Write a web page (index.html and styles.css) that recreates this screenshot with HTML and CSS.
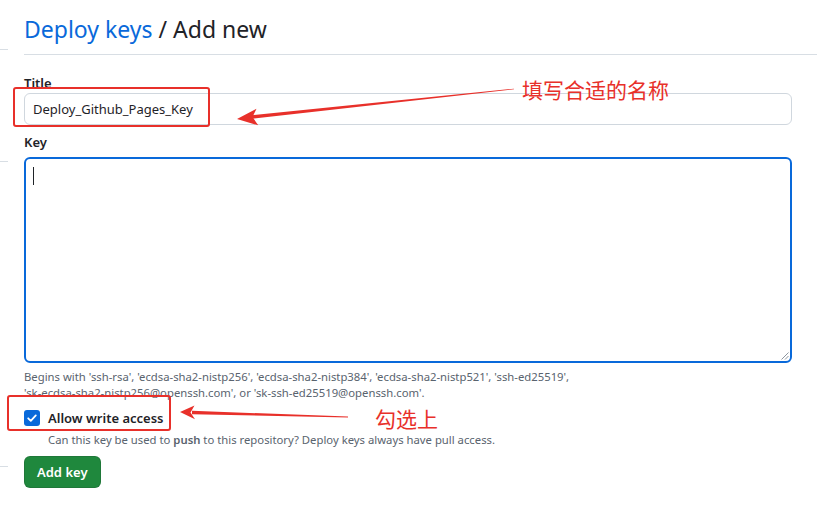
FILE: index.html
```html
<!DOCTYPE html>
<html lang="en">
<head>
<meta charset="utf-8">
<title>Deploy keys / Add new</title>
<link rel="stylesheet" href="styles.css">
</head>
<body>
<div class="page">
  <aside class="side">
    <div class="stub stub-1"></div>
    <div class="stub stub-2"></div>
    <div class="stub stub-3"></div>
  </aside>
  <main class="main">
    <h1 class="heading"><a class="crumb" href="#">Deploy keys</a> / Add new</h1>
    <form class="form">
      <div class="group group-title">
        <label class="label">Title</label>
        <div class="input">Deploy_Github_Pages_Key</div>
      </div>
      <div class="group group-key">
        <label class="label">Key</label>
        <div class="textarea">
          <span class="caret"></span>
          <svg class="grip" width="9" height="9" viewBox="0 0 9 9"><path d="M8.5 1.5 1.5 8.5M8.5 5 5 8.5" stroke="#8c959f" stroke-width="1" fill="none"/></svg>
        </div>
        <p class="hint">Begins with 'ssh-rsa', 'ecdsa-sha2-nistp256', 'ecdsa-sha2-nistp384', 'ecdsa-sha2-nistp521', 'ssh-ed25519',<br>'sk-ecdsa-sha2-nistp256@openssh.com', or 'sk-ssh-ed25519@openssh.com'.</p>
      </div>
      <div class="check-row">
        <span class="checkbox">
          <svg width="12" height="12" viewBox="0 0 12 12"><path d="M2.2 6.3 4.8 8.8 9.8 3.4" stroke="#fff" stroke-width="1.8" fill="none" stroke-linecap="round" stroke-linejoin="round"/></svg>
        </span>
        <span class="check-label">Allow write access</span>
      </div>
      <p class="check-note">Can this key be used to <b>push</b> to this repository? Deploy keys always have pull access.</p>
      <button class="btn" type="button">Add key</button>
    </form>
  </main>

  <div class="mark mark-title"></div>
  <div class="mark mark-check"></div>
  <svg class="arrows" width="817" height="506" viewBox="0 0 817 506">
    <polygon fill="#e8302a" points="514,88.7 514,89.3 252.2,118.7 251.8,115.3"/>
    <polygon fill="#e8302a" points="237,119 256.5,108.8 252.5,117 258.2,125.3"/>
    <polygon fill="#e8302a" points="348,416.6 348,417.4 192,414.2 192,410.8"/>
    <polygon fill="#e8302a" points="180,412 194.5,405.5 190.5,412.5 195,419.2"/>
  </svg>
  <div class="note note-title">填写合适的名称</div>
  <div class="note note-check">勾选上</div>
</div>
</body>
</html>
```

FILE: styles.css
```css
* { box-sizing: border-box; }

html, body {
  margin: 0;
  padding: 0;
  background: #ffffff;
}

body {
  font-family: "Noto Sans", "Liberation Sans", sans-serif;
  color: #1f2328;
  font-size: 13px;
}

.page {
  position: relative;
  width: 817px;
  height: 506px;
  overflow: hidden;
  display: grid;
  grid-template-columns: 8px 1fr;
  column-gap: 16px;
}

/* sidebar separators */
.side {
  display: flex;
  flex-direction: column;
}
.stub {
  border-bottom: 1px solid #d8dee4;
}
.stub-1 { height: 50px; }
.stub-2 { height: 112px; }
.stub-3 { height: 305px; }

.main {
  padding-top: 11px;
}

.heading {
  margin: 0;
  font-size: 23px;
  line-height: 36px;
  font-weight: 400;
  color: #1f2328;
  padding-bottom: 7px;
  border-bottom: 1px solid #d8dee4;
}
.crumb {
  color: #0969da;
  text-decoration: none;
}

.form {
  width: 768px;
}

.group-title { margin-top: 18px; }
.group-key { margin-top: 7px; }

.label {
  display: block;
  font-weight: 600;
  font-size: 13px;
  line-height: 20px;
}
.group-key .label { margin-bottom: 5px; }

.input {
  height: 32px;
  border: 1px solid #d0d7de;
  border-radius: 6px;
  padding: 0 8px;
  font-size: 13px;
  line-height: 30px;
  color: #1f2328;
}

.textarea {
  position: relative;
  height: 206px;
  border: 2px solid #0969da;
  border-radius: 6px;
  padding: 8px 7px;
}
.caret {
  display: block;
  width: 1px;
  height: 18px;
  background: #1f2328;
}
.grip {
  position: absolute;
  right: 1px;
  bottom: 1px;
}

.hint {
  margin: 6px 0 0;
  font-size: 11.3px;
  line-height: 16px;
  color: #59636e;
}

.check-row {
  margin-top: 7px;
  display: flex;
  align-items: center;
  gap: 8px;
  height: 20px;
}
.checkbox {
  width: 16px;
  height: 16px;
  border-radius: 3px;
  background: #0969da;
  display: flex;
  align-items: center;
  justify-content: center;
}
.check-label {
  font-weight: 600;
  font-size: 13px;
  line-height: 20px;
}

.check-note {
  margin: 4px 0 0;
  padding-left: 24px;
  font-size: 11.3px;
  line-height: 16px;
  color: #59636e;
}
.check-note b {
  font-weight: 600;
  color: #59636e;
}

.btn {
  margin-top: 8px;
  height: 32px;
  padding: 0 12px;
  border: 1px solid rgba(31, 35, 40, 0.15);
  border-radius: 6px;
  background: #1f883d;
  color: #ffffff;
  font-family: inherit;
  font-size: 13px;
  font-weight: 600;
  line-height: 20px;
}

/* annotations */
.mark {
  position: absolute;
  border: 2px solid #e8302a;
  border-radius: 3px;
}
.mark-title {
  left: 13px;
  top: 87px;
  width: 197px;
  height: 40px;
}
.mark-check {
  left: 7px;
  top: 395px;
  width: 164px;
  height: 36px;
}

.arrows {
  position: absolute;
  left: 0;
  top: 0;
  pointer-events: none;
}

.note {
  position: absolute;
  font-family: "Noto Sans CJK SC", sans-serif;
  font-size: 21px;
  line-height: 24px;
  color: #e8302a;
  white-space: nowrap;
}
.note-title {
  left: 522px;
  top: 77px;
}
.note-check {
  left: 375px;
  top: 406px;
}
```
